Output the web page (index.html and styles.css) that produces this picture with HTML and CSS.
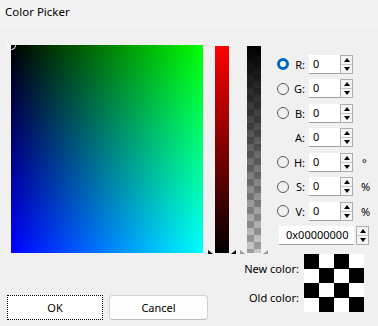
FILE: index.html
```html
<!DOCTYPE html>
<html>
<head>
<meta charset="utf-8">
<link rel="stylesheet" href="styles.css">
</head>
<body>
<div class="window">
  <div class="titlebar">Color Picker</div>
  <div class="content">
    <div class="top">
      <div class="square">
        <span class="sq-marker"></span>
      </div>
      <div class="bar red-bar">
        <svg class="bar-marks" width="28" height="8" viewBox="0 0 28 8">
          <polygon points="0,1 5,5 0,5" fill="#000"/>
          <polygon points="28,1 23,5 28,5" fill="#000"/>
        </svg>
      </div>
      <div class="bar alpha-bar">
        <svg class="bar-marks" width="28" height="8" viewBox="0 0 28 8">
          <polygon points="0,1 5,5 0,5" fill="#9a9a9a"/>
          <polygon points="28,1 23,5 28,5" fill="#9a9a9a"/>
        </svg>
      </div>
      <div class="controls">
        <div class="row"><span class="radio on"></span><span class="lbl">R:</span><span class="field">0</span><span class="spin"><i class="up"></i><i class="dn"></i></span></div>
        <div class="row"><span class="radio"></span><span class="lbl">G:</span><span class="field">0</span><span class="spin"><i class="up"></i><i class="dn"></i></span></div>
        <div class="row"><span class="radio"></span><span class="lbl">B:</span><span class="field">0</span><span class="spin"><i class="up"></i><i class="dn"></i></span></div>
        <div class="row"><span class="radio none"></span><span class="lbl">A:</span><span class="field">0</span><span class="spin"><i class="up"></i><i class="dn"></i></span></div>
        <div class="row"><span class="radio"></span><span class="lbl">H:</span><span class="field">0</span><span class="spin"><i class="up"></i><i class="dn"></i></span><span class="unit deg">°</span></div>
        <div class="row"><span class="radio"></span><span class="lbl">S:</span><span class="field">0</span><span class="spin"><i class="up"></i><i class="dn"></i></span><span class="unit">%</span></div>
        <div class="row"><span class="radio"></span><span class="lbl">V:</span><span class="field">0</span><span class="spin"><i class="up"></i><i class="dn"></i></span><span class="unit">%</span></div>
        <div class="row hexrow"><span class="field hex">0x00000000</span><span class="spin"><i class="up"></i><i class="dn"></i></span></div>
      </div>
    </div>
    <div class="bottom">
      <div class="buttons">
        <div class="btn ok"><span>OK</span></div>
        <div class="btn">Cancel</div>
      </div>
      <div class="swatches">
        <div class="sw-row"><span class="sw-lbl">New color:</span><span class="swatch"></span></div>
        <div class="sw-row"><span class="sw-lbl">Old color:</span><span class="swatch"></span></div>
      </div>
    </div>
  </div>
</div>
</body>
</html>
```
FILE: styles.css
```css
* { box-sizing: border-box; }
html, body { margin: 0; padding: 0; }
body { background: #f0f0f0; }
.window {
  width: 378px; height: 326px; overflow: hidden;
  background: #f0f0f0;
  font-family: "Noto Sans", sans-serif;
  color: #000;
}
.titlebar {
  height: 26px;
  background: #f3f3f3;
  font-size: 11.5px;
  line-height: 23px;
  padding-left: 5px;
}
.content { padding: 19px 0 0 11px; }
.top { display: flex; align-items: flex-start; height: 208px; }
.square {
  position: relative;
  width: 192px; height: 208px;
  background: linear-gradient(to right, #000, #00ff00), linear-gradient(to bottom, #000, #0000ff);
  background-blend-mode: screen;
}
.sq-marker {
  position: absolute; left: -4px; top: -4px;
  width: 9px; height: 9px; border-radius: 50%;
  border: 1px solid #fff;
}
.bar { position: relative; width: 14px; height: 207px; margin-top: 1px; }
.red-bar { margin-left: 12px; background: linear-gradient(#ff0000, #000); }
.alpha-bar {
  margin-left: 18px;
  background:
    linear-gradient(#000, rgba(0,0,0,0.12)),
    conic-gradient(#b4b4b4 25%, #e6e6e6 0 50%, #b4b4b4 0 75%, #e6e6e6 0) 0 0 / 14px 14px;
}
.bar-marks { position: absolute; left: -7px; bottom: -4px; }
.controls { margin-left: 16px; margin-top: 7px; display: flex; flex-direction: column; }
.row { height: 24.5px; display: flex; align-items: center; font-size: 11px; }
.radio {
  width: 12px; height: 12px; border-radius: 50%;
  border: 1px solid #5a5a5a; flex: none;
}
.radio.on { border: 3.5px solid #0067c0; background: #fff; }
.radio.none { border-color: transparent; }
.lbl { width: 16px; text-align: right; margin-right: 4px; }
.field {
  width: 31px; height: 19px; background: #fff;
  border-bottom: 1px solid #a0a0a0;
  padding-left: 4px; line-height: 18px;
}
.spin {
  width: 13px; height: 19px; display: flex; flex-direction: column;
  border: 1px solid #adadad; background: #f6f6f6;
}
.spin i { flex: 1; position: relative; }
.spin i.up { border-bottom: 1px solid #c8c8c8; }
.spin i.up::after, .spin i.dn::after {
  content: ""; position: absolute; left: 3px; width: 0; height: 0;
  border-left: 3px solid transparent; border-right: 3px solid transparent;
}
.spin i.up::after { top: 2px; border-bottom: 4px solid #000; }
.spin i.dn::after { top: 2px; border-top: 4px solid #000; }
.unit { margin-left: 8px; font-size: 11px; }
.unit.deg { margin-left: 9px; }
.hexrow { margin-left: 2px; }
.field.hex { width: 75px; padding-left: 7px; margin-right: 2px; }
.bottom { display: flex; justify-content: space-between; padding-right: 14px; }
.buttons { display: flex; gap: 6px; margin-top: 42px; margin-left: -4px; }
.btn {
  width: 99px; height: 25px;
  background: #fdfdfd; border: 1px solid #d0d0d0; border-bottom-color: #bcbcbc;
  border-radius: 4px;
  font-size: 11px; display: flex; align-items: center; justify-content: center;
}
.btn.ok { width: 96px; border: 1px dotted #000; border-radius: 0; background: #fff; }
.swatches { margin-top: 1px; display: flex; flex-direction: column; }
.sw-row { display: flex; align-items: center; }
.sw-lbl { font-size: 11px; width: 70px; text-align: right; margin-right: 5px; }
.swatch {
  width: 60px; height: 29px;
  background: conic-gradient(#fff 25%, #000 0 50%, #fff 0 75%, #000 0) 0 0 / 30px 29px;
}
```
